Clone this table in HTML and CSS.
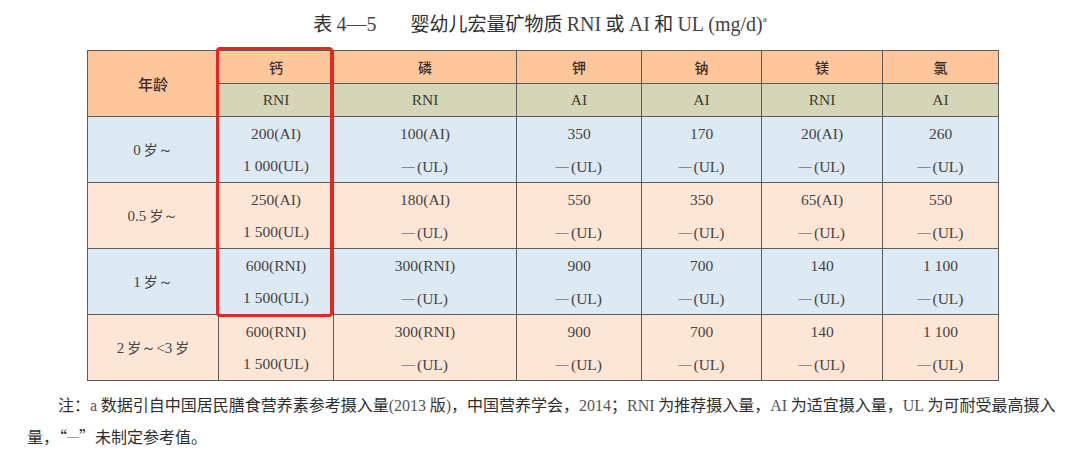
FILE: index.html
```html
<!DOCTYPE html>
<html lang="zh">
<head>
<meta charset="utf-8">
<title>表4-5</title>
<link rel="stylesheet" href="styles.css">
</head>
<body>
<div class="page">
  <h1 class="title"><span class="cjk">表</span> <span class="num">4—5</span><span class="gap"></span><span class="cjk">婴幼儿宏量矿物质</span> <span class="num">RNI</span> <span class="cjk">或</span> <span class="num">AI</span> <span class="cjk">和</span> <span class="num">UL (mg/d)<sup>a</sup></span></h1>

  <div class="table-wrap">
    <table class="data">
      <colgroup>
        <col class="c-age"><col class="c-ca"><col class="c-p"><col class="c-k"><col class="c-na"><col class="c-mg"><col class="c-cl">
      </colgroup>
      <thead>
        <tr class="h1">
          <th rowspan="2" class="age-h">年龄</th>
          <th>钙</th><th>磷</th><th>钾</th><th>钠</th><th>镁</th><th>氯</th>
        </tr>
        <tr class="h2">
          <th>RNI</th><th>RNI</th><th>AI</th><th>AI</th><th>RNI</th><th>AI</th>
        </tr>
      </thead>
      <tbody>
        <tr class="blue">
          <td class="age"><span class="num">0</span> 岁<span class="num">～</span></td>
          <td><div class="ln">200(AI)</div><div class="ln">1 000(UL)</div></td>
          <td><div class="ln">100(AI)</div><div class="ln"><span class="dash">—</span>(UL)</div></td>
          <td><div class="ln">350</div><div class="ln"><span class="dash">—</span>(UL)</div></td>
          <td><div class="ln">170</div><div class="ln"><span class="dash">—</span>(UL)</div></td>
          <td><div class="ln">20(AI)</div><div class="ln"><span class="dash">—</span>(UL)</div></td>
          <td><div class="ln">260</div><div class="ln"><span class="dash">—</span>(UL)</div></td>
        </tr>
        <tr class="peach">
          <td class="age"><span class="num">0.5</span> 岁<span class="num">～</span></td>
          <td><div class="ln">250(AI)</div><div class="ln">1 500(UL)</div></td>
          <td><div class="ln">180(AI)</div><div class="ln"><span class="dash">—</span>(UL)</div></td>
          <td><div class="ln">550</div><div class="ln"><span class="dash">—</span>(UL)</div></td>
          <td><div class="ln">350</div><div class="ln"><span class="dash">—</span>(UL)</div></td>
          <td><div class="ln">65(AI)</div><div class="ln"><span class="dash">—</span>(UL)</div></td>
          <td><div class="ln">550</div><div class="ln"><span class="dash">—</span>(UL)</div></td>
        </tr>
        <tr class="blue">
          <td class="age"><span class="num">1</span> 岁<span class="num">～</span></td>
          <td><div class="ln">600(RNI)</div><div class="ln">1 500(UL)</div></td>
          <td><div class="ln">300(RNI)</div><div class="ln"><span class="dash">—</span>(UL)</div></td>
          <td><div class="ln">900</div><div class="ln"><span class="dash">—</span>(UL)</div></td>
          <td><div class="ln">700</div><div class="ln"><span class="dash">—</span>(UL)</div></td>
          <td><div class="ln">140</div><div class="ln"><span class="dash">—</span>(UL)</div></td>
          <td><div class="ln">1 100</div><div class="ln"><span class="dash">—</span>(UL)</div></td>
        </tr>
        <tr class="peach">
          <td class="age"><span class="num">2</span> 岁<span class="num">～&lt;3</span> 岁</td>
          <td><div class="ln">600(RNI)</div><div class="ln">1 500(UL)</div></td>
          <td><div class="ln">300(RNI)</div><div class="ln"><span class="dash">—</span>(UL)</div></td>
          <td><div class="ln">900</div><div class="ln"><span class="dash">—</span>(UL)</div></td>
          <td><div class="ln">700</div><div class="ln"><span class="dash">—</span>(UL)</div></td>
          <td><div class="ln">140</div><div class="ln"><span class="dash">—</span>(UL)</div></td>
          <td><div class="ln">1 100</div><div class="ln"><span class="dash">—</span>(UL)</div></td>
        </tr>
      </tbody>
    </table>
    <div class="highlight"></div>
  </div>

  <p class="note">注：<span class="num">a</span> 数据引自中国居民膳食营养素参考摄入量<span class="num">(2013</span> 版<span class="num">)</span>，中国营养学会，<span class="num">2014</span>；<span class="num">RNI</span> 为推荐摄入量，<span class="num">AI</span> 为适宜摄入量，<span class="num">UL</span> 为可耐受最高摄入<br>量，“<span class="num note-dash">—</span>”未制定参考值。</p>
</div>
</body>
</html>
```

FILE: styles.css
```css
html, body {
  margin: 0;
  padding: 0;
  background: #ffffff;
}

body {
  width: 1080px;
  height: 456px;
  overflow: hidden;
  font-family: "Noto Sans CJK SC", "Noto Sans", sans-serif;
  color: #333333;
}

.page {
  display: flex;
  flex-direction: column;
}

.num {
  font-family: "Liberation Serif", "DejaVu Serif", serif;
}

.title {
  margin: 0;
  padding-top: 10px;
  height: 50px;
  box-sizing: border-box;
  text-align: center;
  font-size: 19px;
  font-weight: normal;
  line-height: 26px;
  color: #2f2f2f;
}

.title .num {
  font-size: 20px;
  color: #444;
}

.title .gap {
  display: inline-block;
  width: 34px;
}

.title sup {
  font-size: 9px;
  vertical-align: 9px;
  line-height: 0;
}

.table-wrap {
  position: relative;
  margin-left: 87px;
  width: 911px;
}

.data {
  border-collapse: collapse;
  width: 911px;
  table-layout: fixed;
  border: 1px solid #5c5c5c;
}

.c-age { width: 131px; }
.c-ca { width: 115px; }
.c-p { width: 183px; }
.c-k { width: 125px; }
.c-na { width: 120px; }
.c-mg { width: 121px; }
.c-cl { width: 116px; }

.data th,
.data td {
  border: 1px solid #5c5c5c;
  padding: 0;
  text-align: center;
  font-weight: normal;
}

.data th {
  font-size: 14px;
  height: 32px;
}

.h1 th {
  background: #fdc69b;
  color: #3a3030;
  font-weight: 500;
}

.h1 th.age-h {
  font-size: 15px;
}

.h2 th {
  background: #d5d6b8;
  font-family: "Liberation Serif", "DejaVu Serif", serif;
  font-size: 15.5px;
  color: #3c3c36;
}

.data td {
  height: 65px;
  font-family: "Liberation Serif", "DejaVu Serif", serif;
  font-size: 15.5px;
  color: #444444;
}

.data td.age {
  font-family: "Noto Sans CJK SC", "Noto Sans", sans-serif;
  font-size: 14px;
  color: #444;
}

.data td.age .num {
  font-size: 15px;
}

.ln {
  line-height: 32px;
  height: 32px;
}

.dash {
  display: inline-block;
  font-size: 12px;
  margin-right: 3px;
  vertical-align: 2px;
  transform: scaleX(1.1);
}

tr.blue td { background: #dde9f3; }
tr.peach td { background: #fee6d7; }

.highlight {
  position: absolute;
  left: 129px;
  top: -3px;
  width: 117px;
  height: 270px;
  box-sizing: border-box;
  border: 3px solid #e6261f;
  border-radius: 4px;
  pointer-events: none;
}

.note {
  margin: 8px 0 0 27px;
  width: 1050px;
  font-size: 16px;
  line-height: 30px;
  text-indent: 31px;
  color: #2e2e2e;
}

.note .num {
  font-size: 16px;
  color: #555;
}

.note .note-dash {
  display: inline-block;
  text-indent: 0;
  font-size: 12px;
  vertical-align: 3px;
}
```
